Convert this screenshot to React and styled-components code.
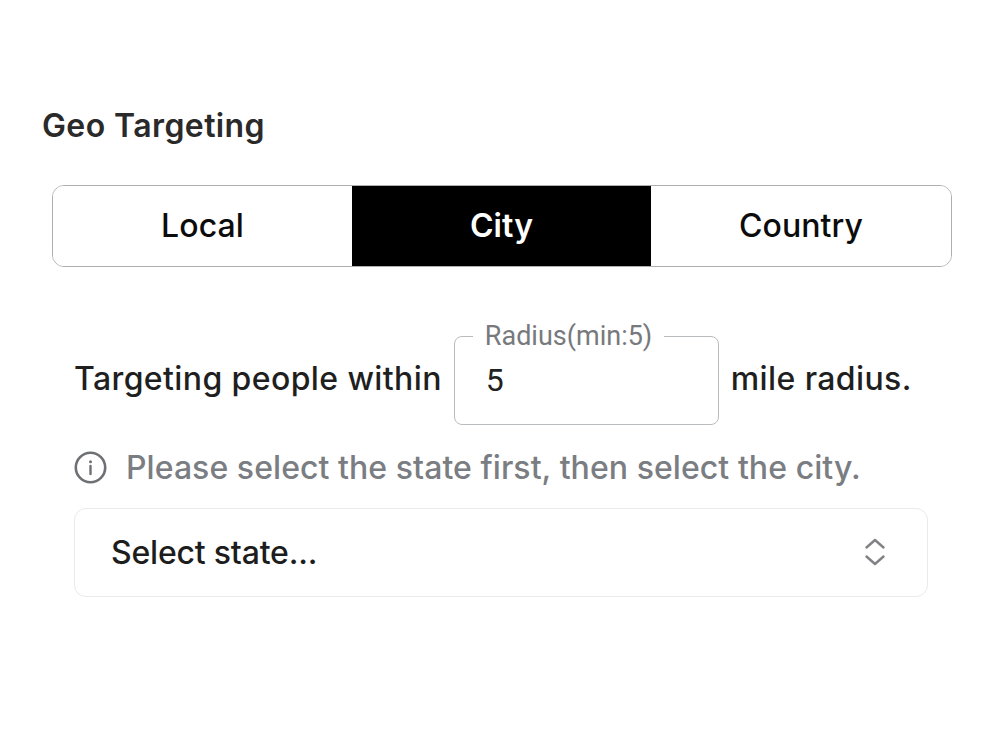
import React from "react";
import styled, { createGlobalStyle } from "styled-components";

const GlobalStyle = createGlobalStyle`
  html, body {
    margin: 0;
    padding: 0;
    background: #fff;
  }
  * {
    box-sizing: border-box;
  }
`;

const Page = styled.div`
  width: 1000px;
  height: 740px;
  padding: 107px 48px 0 42px;
  font-family: Inter, "Liberation Sans", sans-serif;
  color: #1f1f1f;
`;

const Title = styled.h2`
  margin: 0;
  height: 38px;
  font-size: 32px;
  line-height: 38px;
  font-weight: 600;
  letter-spacing: 0.4px;
  color: #2a2a2a;
`;

const Tabs = styled.div`
  display: grid;
  grid-template-columns: 299px 299px 1fr;
  width: 900px;
  height: 82px;
  margin: 40px 0 0 10px;
  border: 1px solid #aeaeae;
  border-radius: 12px;
  overflow: hidden;
`;

const Tab = styled.div`
  display: flex;
  align-items: center;
  justify-content: center;
  padding-bottom: 1px;
  font-size: 32px;
  font-weight: ${(p) => (p.$active ? 600 : 500)};
  letter-spacing: 0.1px;
  color: ${(p) => (p.$active ? "#fff" : "#0c0c0c")};
  background: ${(p) => (p.$active ? "#000" : "#fff")};
`;

const Content = styled.div`
  margin-left: 32px;
  width: 854px;
`;

const RadiusRow = styled.div`
  display: flex;
  align-items: flex-end;
  gap: 12px;
  margin-top: 54px;
  font-size: 32px;
  font-weight: 500;
  letter-spacing: 0.39px;
`;

const RowText = styled.span`
  white-space: nowrap;
  line-height: 40px;
  padding-bottom: 26px;
`;

const Field = styled.fieldset`
  flex: none;
  width: 265px;
  height: 104px;
  margin: 0;
  padding: 0 0 0 31px;
  border: 1px solid #b9bcbf;
  border-radius: 8px;
  font-family: Roboto, sans-serif;
  letter-spacing: 0;
`;

const FieldLabel = styled.legend`
  margin-left: -13px;
  padding: 0 12px;
  font-size: 27px;
  line-height: 30px;
  font-weight: 400;
  color: #77797c;
`;

const FieldValue = styled.div`
  font-size: 32px;
  line-height: 40px;
  margin-top: 9px;
  font-weight: 400;
  color: #222;
`;

const Hint = styled.div`
  display: flex;
  align-items: center;
  gap: 19px;
  height: 44px;
  margin-top: 20px;
  font-size: 32px;
  font-weight: 500;
  letter-spacing: 0.06px;
  white-space: nowrap;
  color: #7a7d82;
`;

const SelectBox = styled.div`
  display: flex;
  align-items: center;
  justify-content: space-between;
  height: 89px;
  margin-top: 19px;
  padding: 0 41px 1px 36px;
  border: 1px solid #e9eaeb;
  border-radius: 12px;
  font-size: 32px;
  font-weight: 500;
  letter-spacing: -0.2px;
  color: #1d1d1d;
`;

function InfoIcon() {
  return (
    <svg width="33" height="33" viewBox="0 0 33 33" fill="none" style={{ flex: "none" }}>
      <circle cx="16.5" cy="16.5" r="14.7" stroke="#6e7074" strokeWidth="2.6" />
      <path d="M16.5 15v8" stroke="#6e7074" strokeWidth="2.4" strokeLinecap="round" />
      <circle cx="16.5" cy="10.8" r="1.5" fill="#6e7074" />
    </svg>
  );
}

function UpDownIcon() {
  return (
    <svg width="22" height="30" viewBox="0 0 22 30" fill="none">
      <path
        d="M2.5 10.5 11 3l8.5 7.5M2.5 19.5 11 27l8.5-7.5"
        stroke="#808285"
        strokeWidth="2.4"
        strokeLinecap="round"
        strokeLinejoin="round"
      />
    </svg>
  );
}

export default function App() {
  return (
    <>
      <GlobalStyle />
      <Page>
        <Title>Geo Targeting</Title>
        <Tabs>
          <Tab>Local</Tab>
          <Tab $active>City</Tab>
          <Tab>Country</Tab>
        </Tabs>
        <Content>
          <RadiusRow>
            <RowText>Targeting people within</RowText>
            <Field>
              <FieldLabel>Radius(min:5)</FieldLabel>
              <FieldValue>5</FieldValue>
            </Field>
            <RowText>mile radius.</RowText>
          </RadiusRow>
          <Hint>
            <InfoIcon />
            Please select the state first, then select the city.
          </Hint>
          <SelectBox>
            Select state...
            <UpDownIcon />
          </SelectBox>
        </Content>
      </Page>
    </>
  );
}
